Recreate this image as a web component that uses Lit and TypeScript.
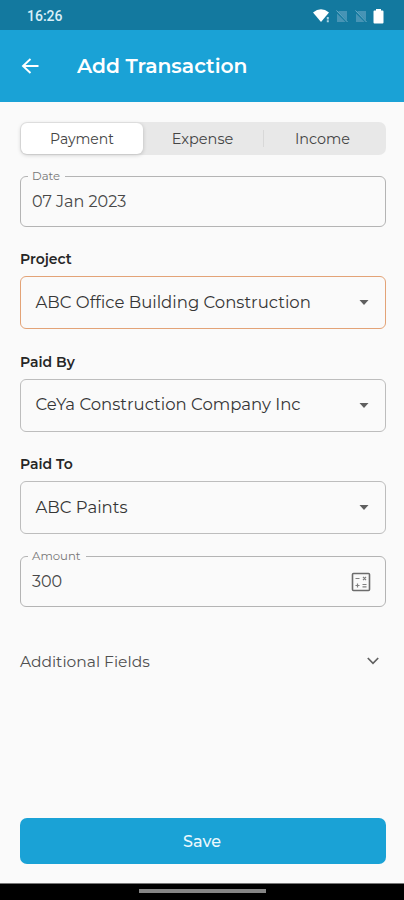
import { LitElement, html, css, svg } from "lit";
import { customElement, property } from "lit/decorators.js";

@customElement("outlined-field")
class OutlinedField extends LitElement {
  @property() label = "";
  @property() value = "";

  static styles = css`
    :host { display: block; }
    fieldset {
      box-sizing: border-box;
      height: 58px;
      margin: 0;
      padding: 0 14px 0 7px;
      border: 1px solid #b4b4b4;
      border-radius: 6px;
      min-width: 0;
    }
    legend {
      padding: 0 5px 0 4px;
      font-size: 11.7px;
      line-height: 14px;
      height: 15px;
      color: #777;
    }
    .row {
      display: flex;
      align-items: center;
      justify-content: space-between;
      height: 35px;
      padding-left: 4px;
      font-size: 16px;
      color: #484848;
    }
  `;

  render() {
    return html`<fieldset>
      <legend>${this.label}</legend>
      <div class="row"><span>${this.value}</span><slot></slot></div>
    </fieldset>`;
  }
}

@customElement("select-field")
class SelectField extends LitElement {
  @property() label = "";
  @property() value = "";

  static styles = css`
    :host { display: block; }
    .label {
      height: 18px;
      line-height: 18px;
      font-size: 14px;
      font-weight: 600;
      color: #262626;
    }
    .box {
      box-sizing: border-box;
      display: flex;
      align-items: center;
      justify-content: space-between;
      height: 53px;
      margin-top: 8px;
      padding: 0 16px 0 14.5px;
      border: 1px solid var(--box-line, #bdbdbd);
      border-radius: 6px;
      font-size: 16.5px;
      color: #363636;
      white-space: nowrap;
    }
    .value { margin-top: -2px; }
    svg { display: block; flex: none; }
  `;

  render() {
    return html`
      <div class="label">${this.label}</div>
      <div class="box">
        <span class="value">${this.value}</span>
        <svg width="10" height="5" viewBox="0 0 10 5"><path d="M.5 0h9L5 5z" fill="#5f5f5f"/></svg>
      </div>
    `;
  }
}

const noSim = () => svg`<svg width="12" height="13" viewBox="0 0 12 13">
  <path d="M3 1h8v11H1V3z" fill="#4794b5"/>
  <path d="M.5 1.500l11 11" stroke="#12799f" stroke-width="2"/>
  <path d="M.5 .5l11 11.500" stroke="#6badc8" stroke-width="1"/>
</svg>`;

@customElement("app-root")
class AppRoot extends LitElement {
  static styles = css`
    :host {
      display: flex;
      flex-direction: column;
      height: 900px;
      overflow: hidden;
      background: #fafafa;
      font-family: Montserrat, Inter, sans-serif;
    }
    svg { display: block; flex: none; }
    .status {
      display: flex;
      align-items: center;
      justify-content: space-between;
      box-sizing: border-box;
      height: 30px;
      padding: 2px 20px 0 27px;
      background: #13799f;
      color: #d9eff8;
      font: 500 14px Roboto, sans-serif;
    }
    .icons { display: flex; align-items: center; }
    .icons svg:nth-child(2) { margin-left: 6px; }
    .icons svg:nth-child(3) { margin-left: 7px; }
    .icons svg:nth-child(4) { margin-left: 6px; }
    .bar {
      display: flex;
      align-items: center;
      gap: 38px;
      height: 72px;
      padding-left: 21px;
      background: #1aa2d6;
      color: #fff;
    }
    .title { font-size: 20.3px; font-weight: 600; margin-top: -1px; }
    main { flex: 1; display: flex; flex-direction: column; padding: 20px 18px 19px 20px; }
    .segments {
      display: grid;
      grid-template-columns: 1fr 1fr 1fr;
      height: 33px;
      border-radius: 7px;
      background: #e8e8e8;
      font-size: 14px;
      color: #444;
    }
    .seg { display: flex; align-items: center; justify-content: center; }
    .seg.on {
      margin: 1px -1px 1px 1px;
      border-radius: 6px;
      background: #fff;
      box-shadow: 0 1px 4px rgba(0, 0, 0, 0.2);
    }
    .exp { font-size: 14.5px; padding-right: 1px; }
    .inc { font-size: 14.4px; position: relative; padding-right: 5px; }
    .inc::before {
      content: "";
      position: absolute;
      left: -1px;
      top: 8px;
      width: 1px;
      height: 17px;
      background: #d8d8d8;
    }
    .date { margin-top: 14px; }
    .project { margin-top: 23px; --box-line: #e3a377; }
    .by, .to { margin-top: 23.5px; }
    .amount { margin-top: 15px; }
    .more {
      display: flex;
      align-items: center;
      justify-content: space-between;
      height: 24px;
      margin-top: 42px;
      padding: 0 7px 0 0;
      font-size: 15.5px;
      color: #505050;
    }
    .save {
      display: block;
      height: 46px;
      margin: auto 0 0;
      padding: 0 2px 0 0;
      border: 0;
      border-radius: 7px;
      background: #1aa2d6;
      color: #ebf8fd;
      font: 500 16px Montserrat, Inter, sans-serif;
    }
    .nav {
      display: flex;
      justify-content: center;
      box-sizing: border-box;
      height: 17px;
      padding-top: 5px;
      border-top: 1px solid #777;
      background: #000;
    }
    .handle { width: 127px; height: 4px; background: #858585; }
  `;

  render() {
    return html`
      <div class="status">
        <span>16:26</span>
        <div class="icons">
          <svg width="17" height="14" viewBox="0 0 17 14">
            <path d="M0 3.400Q8-3 16 3.400L8 13z" fill="#fff"/>
            <path d="M13.300 8h3.200v5.500h-3.200z" fill="#13799f"/>
            <path d="M14.800 8v2.600M14.800 11.300v2" stroke="#a9d3e3" stroke-width="2"/>
          </svg>
          ${noSim()}${noSim()}
          <svg width="11" height="15" viewBox="0 0 11 15"><path d="M3 0h5v1.500h1.500q1 0 1 1V13.500q0 1-1 1h-8q-1 0-1-1v-11q0-1 1-1H3z" fill="#fff"/></svg>
        </div>
      </div>
      <div class="bar">
        <svg width="18" height="16" viewBox="0 0 18 16"><path d="M17.500 8H2M9.500 1L2 8l7.500 7" fill="none" stroke="#fff" stroke-width="1.900"/></svg>
        <span class="title">Add Transaction</span>
      </div>
      <main>
        <div class="segments">
          <div class="seg on">Payment</div>
          <div class="seg exp">Expense</div>
          <div class="seg inc">Income</div>
        </div>
        <outlined-field class="date" label="Date" value="07 Jan 2023"></outlined-field>
        <select-field class="project" label="Project" value="ABC Office Building Construction"></select-field>
        <select-field class="by" label="Paid By" value="CeYa Construction Company Inc"></select-field>
        <select-field class="to" label="Paid To" value="ABC Paints"></select-field>
        <outlined-field class="amount" label="Amount" value="300">
          <svg width="20" height="20" viewBox="0 0 20 20">
            <rect x="1.500" y="1.500" width="17" height="17" rx="1" fill="none" stroke="#6c6c6c" stroke-width="1.600"/>
            <path d="M4.500 6.500h4M4.500 13.500h4M6.500 11.500v4M11.500 12.500h4M11.500 14.800h4M12 5l3 3M15 5l-3 3" stroke="#808080" stroke-width="1.200"/>
          </svg>
        </outlined-field>
        <div class="more">
          <span>Additional Fields</span>
          <svg width="12" height="8" viewBox="0 0 12 8"><path d="M.8 1L6 6.300 11.200 1" fill="none" stroke="#606060" stroke-width="1.700"/></svg>
        </div>
        <button class="save">Save</button>
      </main>
      <div class="nav"><div class="handle"></div></div>
    `;
  }
}
